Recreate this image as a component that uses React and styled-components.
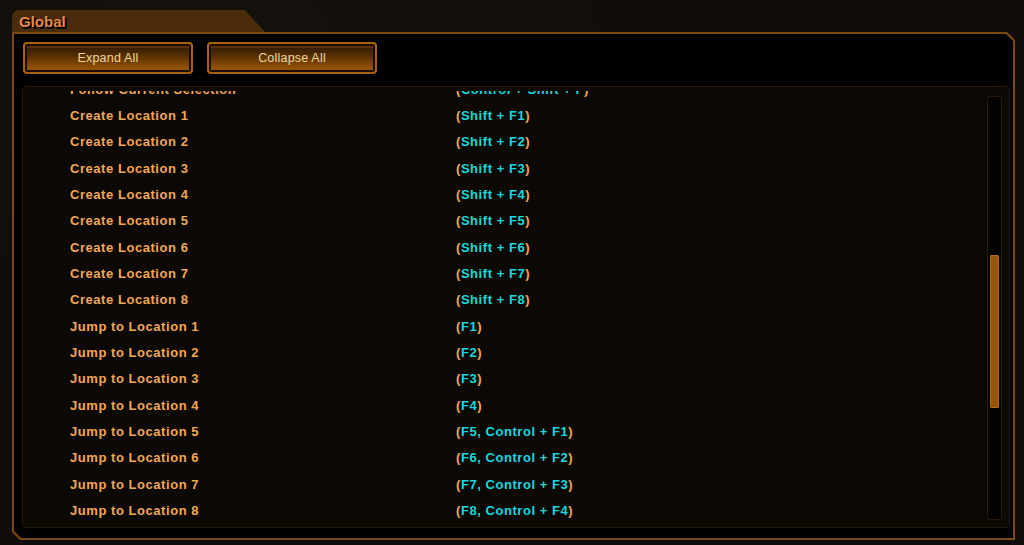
import React from 'react'
import styled, { createGlobalStyle } from 'styled-components';

const GlobalStyle = createGlobalStyle`
   html, body {
      margin: 0;
      padding: 0;
      background: #0f0c09;
      font-family: "Liberation Sans", Arial, sans-serif;
   }
`;

const Page = styled.div`
   width: 1024px;
   height: 545px;
   box-sizing: border-box;
   padding: 10px 9px 5px 12px;
   display: flex;
   flex-direction: column;
   background:
      radial-gradient(ellipse at 20% 10%, #15110c 0%, transparent 60%),
      #0f0c09;
   overflow: hidden;
`;

const Tab = styled.div`
   width: 253px;
   height: 22px;
   box-sizing: border-box;
   padding: 3px 0 0 7px;
   background: #4a2b0a;
   border-top-left-radius: 7px;
   clip-path: polygon(0 0, 233px 0, 100% 100%, 0 100%);
   color: #e8874a;
   font-size: 15px;
   font-weight: bold;
   text-shadow: 1px 1px 0 #000, 2px 2px 0 #000;
`;

const chamfer = (n) => `polygon(0 0, calc(100% - ${n}px) 0, 100% ${n}px, 100% 100%, ${n}px 100%, 0 calc(100% - ${n}px))`;

const PanelFrame = styled.div`
   flex: 1;
   padding: 2px;
   background: #7a4a12;
   clip-path: ${chamfer(8)};
   display: flex;
`;

const Panel = styled.div`
   flex: 1;
   background: #000;
   clip-path: ${chamfer(7)};
   display: flex;
   flex-direction: column;
   padding: 8px 3px 10px 8px;
   gap: 12px;
`;

const Toolbar = styled.div`
   display: flex;
   gap: 14px;
   padding-left: 1px;
`;

const Button = styled.button`
   width: 170px;
   height: 32px;
   border: 2px solid #a8620f;
   border-radius: 4px;
   padding: 0;
   background: linear-gradient(#2a1500 0%, #4e2a02 35%, #8a4c04 80%, #9c5606 100%);
   box-shadow: inset 0 0 0 2px #1a0c00, inset 0 2px 0 2px #5a3206;
   color: #eed59b;
   font-family: "Liberation Sans", Arial, sans-serif;
   font-size: 12.5px;
   letter-spacing: 0.2px;
   cursor: pointer;
`;

const ListBox = styled.div`
   flex: 1;
   display: flex;
   border: 1px solid #24170a;
   border-radius: 4px;
   background: #0c0905;
   overflow: hidden;
`;

const Rows = styled.div`
   flex: 1;
   overflow: hidden;
   margin-top: 4px;
   padding-left: 47px;
`;

const RowList = styled.div`
   margin-top: -15px;
`;

const Row = styled.div`
   display: flex;
   align-items: center;
   height: 26.33px;
   font-size: 13px;
   font-weight: bold;
   letter-spacing: 0.55px;
`;

const Name = styled.span`
   width: 386px;
   color: #f1a755;
`;

const Keys = styled.span`
   color: #f1a755;
`;

const Combo = styled.span`
   color: #16d8de;
`;

const Track = styled.div`
   width: 15px;
   margin: 9px 7px 7px 0;
   box-sizing: border-box;
   border: 1px solid #2b1b0b;
   border-radius: 3px;
   background: #030201;
   padding: 158px 2px 0 2px;
`;

const Thumb = styled.div`
   height: 153px;
   border-radius: 2px;
   background: #955505;
   box-shadow: inset 0 0 0 1px #b56d12;
`;

const rows = [
   ['Follow Current Selection', 'Control + Shift + F'],
   ['Create Location 1', 'Shift + F1'],
   ['Create Location 2', 'Shift + F2'],
   ['Create Location 3', 'Shift + F3'],
   ['Create Location 4', 'Shift + F4'],
   ['Create Location 5', 'Shift + F5'],
   ['Create Location 6', 'Shift + F6'],
   ['Create Location 7', 'Shift + F7'],
   ['Create Location 8', 'Shift + F8'],
   ['Jump to Location 1', 'F1'],
   ['Jump to Location 2', 'F2'],
   ['Jump to Location 3', 'F3'],
   ['Jump to Location 4', 'F4'],
   ['Jump to Location 5', 'F5, Control + F1'],
   ['Jump to Location 6', 'F6, Control + F2'],
   ['Jump to Location 7', 'F7, Control + F3'],
   ['Jump to Location 8', 'F8, Control + F4'],
];

const App = () => {
   return (
      <Page>
         <GlobalStyle />
         <Tab>Global</Tab>
         <PanelFrame>
            <Panel>
               <Toolbar>
                  <Button>Expand All</Button>
                  <Button>Collapse All</Button>
               </Toolbar>
               <ListBox>
                  <Rows>
                     <RowList>
                        {rows.map(([name, keys]) => (
                           <Row key={name}>
                              <Name>{name}</Name>
                              <Keys>(<Combo>{keys}</Combo>)</Keys>
                           </Row>
                        ))}
                     </RowList>
                  </Rows>
                  <Track>
                     <Thumb />
                  </Track>
               </ListBox>
            </Panel>
         </PanelFrame>
      </Page>
   )
}

export default App;
